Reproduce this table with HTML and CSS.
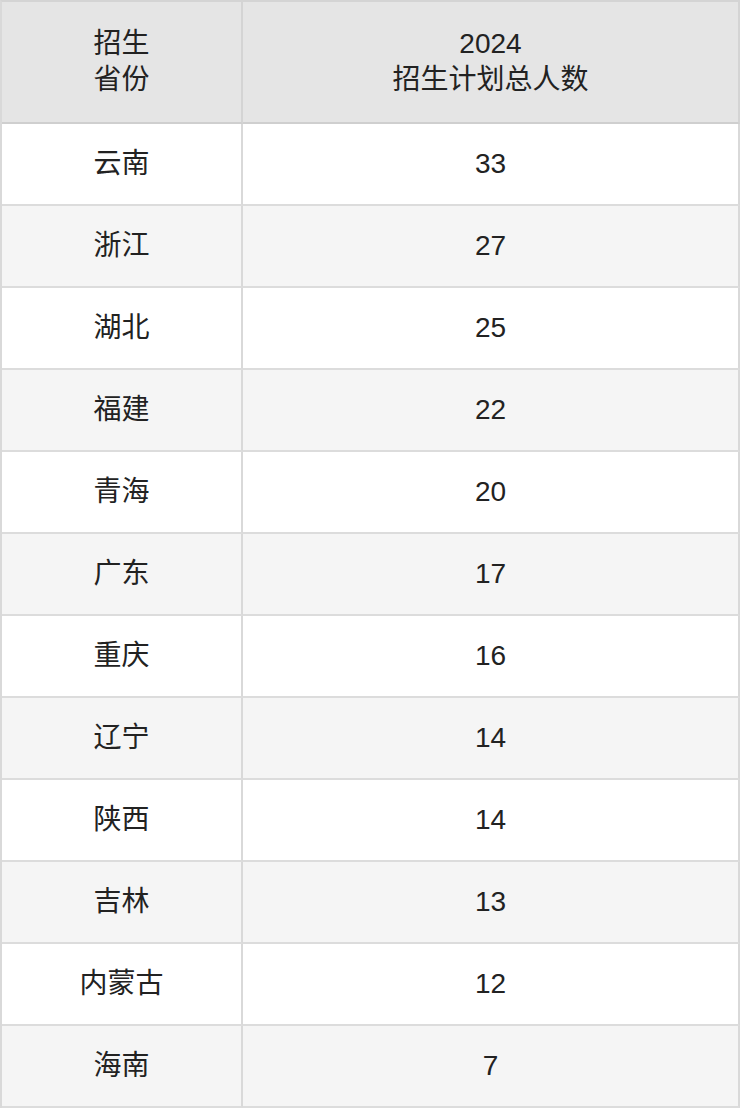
FILE: index.html
```html
<!DOCTYPE html>
<html lang="zh">
<head>
<meta charset="utf-8">
<link rel="stylesheet" href="styles.css">
</head>
<body>
<table class="plan">
  <thead>
    <tr><th class="c1">招生<br>省份</th><th class="c2">2024<br>招生计划总人数</th></tr>
  </thead>
  <tbody>
    <tr><td>云南</td><td>33</td></tr>
    <tr><td>浙江</td><td>27</td></tr>
    <tr><td>湖北</td><td>25</td></tr>
    <tr><td>福建</td><td>22</td></tr>
    <tr><td>青海</td><td>20</td></tr>
    <tr><td>广东</td><td>17</td></tr>
    <tr><td>重庆</td><td>16</td></tr>
    <tr><td>辽宁</td><td>14</td></tr>
    <tr><td>陕西</td><td>14</td></tr>
    <tr><td>吉林</td><td>13</td></tr>
    <tr><td>内蒙古</td><td>12</td></tr>
    <tr><td>海南</td><td>7</td></tr>
  </tbody>
</table>
</body>
</html>
```
FILE: styles.css
```css
html, body { margin: 0; padding: 0; background: #fff; }
.plan {
  width: 740px;
  border-collapse: separate;
  border-spacing: 0;
  table-layout: fixed;
  font-family: "Liberation Sans", "Noto Sans CJK SC", sans-serif;
  font-size: 28px;
  color: #222;
  border-top: 2px solid #d4d4d4;
  border-left: 2px solid #d9d9d9;
}
.plan th, .plan td {
  text-align: center;
  vertical-align: middle;
  padding: 0;
  border-right: 2px solid #d9d9d9;
  border-bottom: 2px solid #dcdcdc;
}
.plan th {
  height: 120px;
  background: #e5e5e5;
  font-weight: normal;
  line-height: 36px;
  border-bottom-color: #cfcfcf;
  border-right-color: #d4d4d4;
}
.plan .c1 { width: 239px; }
.plan td { height: 80px; line-height: 36px; }
.plan tbody tr:nth-child(even) td { background: #f5f5f5; }
.plan tbody tr:nth-child(odd) td { background: #fff; }
```
